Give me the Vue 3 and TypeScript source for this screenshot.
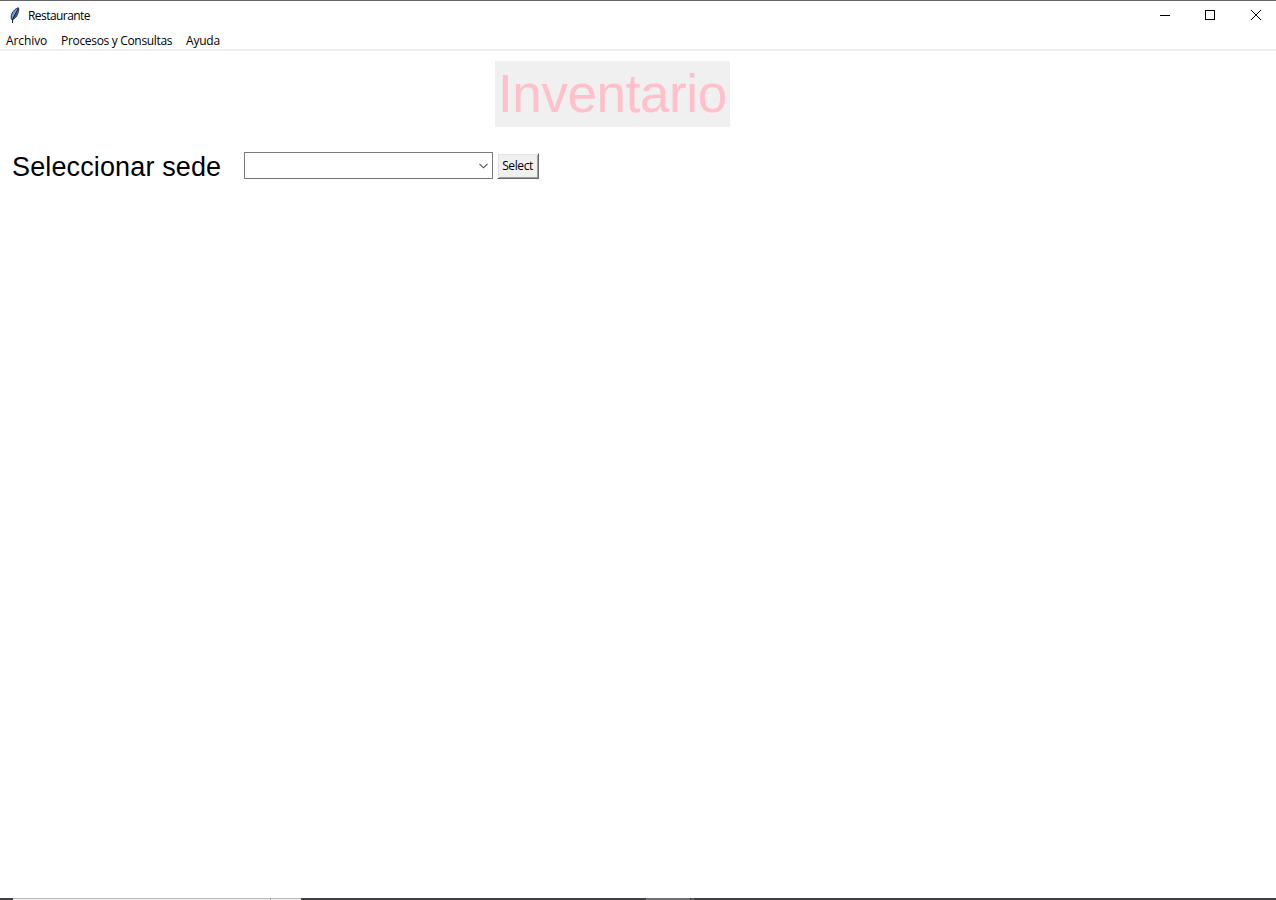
<script setup lang="ts">
import { ref } from 'vue'

const menus = ref<string[]>(['Archivo', 'Procesos y Consultas', 'Ayuda'])
</script>

<template>
  <div class="window">
    <header class="titlebar">
      <svg class="feather" width="12" height="17" viewBox="0 0 12 17">
        <path d="M9.4 0.8 C6.8 1.3 4.2 3.8 2.8 7 C1.9 9.2 1.9 11.3 2.9 12.8 C6.2 11.6 8 9.2 9 6 C9.6 4 10.2 2.2 9.4 0.8 Z" fill="#6ba3ec" stroke="#222" stroke-width="1" />
        <path d="M9 3.4 L8.4 7.4 L6 11 L3.6 12.6 L6.2 8 Z" fill="#2d5490" />
        <path d="M9 2 L6 7.6 L3.8 12 L3.4 16" stroke="#111" stroke-width="1" fill="none" />
      </svg>
      <span class="title">Restaurante</span>
      <div class="controls">
        <svg width="46" height="30" viewBox="0 0 46 30" shape-rendering="crispEdges"><path d="M22 14h10v1h-10z" /></svg>
        <svg width="46" height="30" viewBox="0 0 46 30" shape-rendering="crispEdges"><path d="M21.5 9.5h9v9h-9z" fill="none" stroke="#000" /></svg>
        <svg width="46" height="30" viewBox="0 0 46 30"><path d="M21 9l10 10M31 9l-10 10" fill="none" stroke="#000" stroke-width="1" /></svg>
      </div>
    </header>
    <nav class="menubar">
      <span v-for="(m, i) in menus" :key="m" :class="['menu', 'menu-' + i]">{{ m }}</span>
    </nav>
    <main class="content">
      <h1 class="heading"><span>Inventario</span></h1>
      <div class="row">
        <label class="label">Seleccionar sede</label>
        <div class="combo">
          <svg width="9" height="6" viewBox="0 0 9 6"><path d="M0.5 0.8l4 4 4-4" fill="none" stroke="#505050" stroke-width="1.1" /></svg>
        </div>
        <button class="select" type="button"><span>Select</span></button>
      </div>
    </main>
    <footer class="edge">
      <i class="dark start"></i><i class="light search"></i><i class="tick"></i><i class="light rest"></i><i class="dark mid"></i><i class="grey"></i><i class="line"></i><i class="soft"></i><i class="dark fill"></i>
    </footer>
  </div>
</template>

<style>
body {
  background: #fff;
  overflow: hidden;
}
</style>

<style scoped>
.window {
  box-sizing: border-box;
  width: 1276px;
  height: 900px;
  display: flex;
  flex-direction: column;
  border-top: 1px solid #666;
  background: #fff;
  color: #000;
  font: 12px/16px "Open Sans", "Noto Sans", sans-serif;
}
.titlebar {
  display: flex;
  height: 30px;
  flex: none;
}
.feather {
  margin: 6px 7px 0 9px;
}
.title {
  margin-top: 7px;
  letter-spacing: -0.56px;
}
.controls {
  display: flex;
  margin-left: auto;
}
.controls svg {
  display: block;
}
.menubar {
  box-sizing: border-box;
  display: flex;
  flex: none;
  height: 20px;
  padding: 2px 0 0 6px;
  border-bottom: 2px solid #f0f0f0;
}
.menu {
  white-space: nowrap;
  flex: none;
  letter-spacing: -0.32px;
}
.menu-0 {
  width: 55px;
  letter-spacing: -0.1px;
}
.menu-1 {
  width: 125px;
}
.menu-2 {
  letter-spacing: -0.2px;
}
.content {
  flex: 1;
}
.heading {
  box-sizing: border-box;
  width: 235px;
  height: 66px;
  margin: 10px 0 0 495px;
  padding: 2px 0 0 3px;
  background: #f0f0f0;
  color: #ffc0cb;
  font: 400 53px/62px "Liberation Sans", Arial, sans-serif;
  letter-spacing: -0.4px;
  white-space: nowrap;
}
.row {
  display: flex;
  margin: 25px 0 0 12px;
}
.label {
  width: 232px;
  height: 27px;
  padding-top: 1px;
  box-sizing: border-box;
  font: 27px/28px "Liberation Sans", Arial, sans-serif;
  letter-spacing: 0.13px;
  white-space: nowrap;
}
.combo {
  box-sizing: border-box;
  display: flex;
  align-items: center;
  justify-content: flex-end;
  width: 249px;
  height: 27px;
  padding-right: 4px;
  border: 1px solid #7a7a7a;
}
.select {
  box-sizing: border-box;
  width: 42px;
  height: 26px;
  margin: 1px 0 0 4px;
  padding: 0 1px 0 0;
  border: 1px solid;
  border-color: #fff #696969 #696969 #fff;
  box-shadow: inset 1px 1px 0 #e3e3e3, inset -1px -1px 0 #a0a0a0;
  background: #f0f0f0;
  color: #000;
  font: 12px/16px "Open Sans", "Noto Sans", sans-serif;
  letter-spacing: -0.4px;
}
.edge {
  display: flex;
  height: 2px;
  flex: none;
}
.edge i {
  box-sizing: border-box;
  flex: none;
  height: 2px;
}
.dark {
  background: #414042;
}
.light {
  background: #f1f1f1;
  border-top: 1px solid #b9b9b9;
}
.start {
  width: 13px;
}
.search {
  width: 257px;
}
.tick {
  width: 1px;
  background: #aaa;
}
.rest {
  width: 30px;
}
.mid {
  width: 345px;
}
.grey {
  width: 44px;
  background: #706f71;
}
.line {
  width: 1px;
  background: #414042;
}
.soft {
  width: 3px;
  background: #5c5b5d;
}
.edge .fill {
  flex: 1;
}
</style>
